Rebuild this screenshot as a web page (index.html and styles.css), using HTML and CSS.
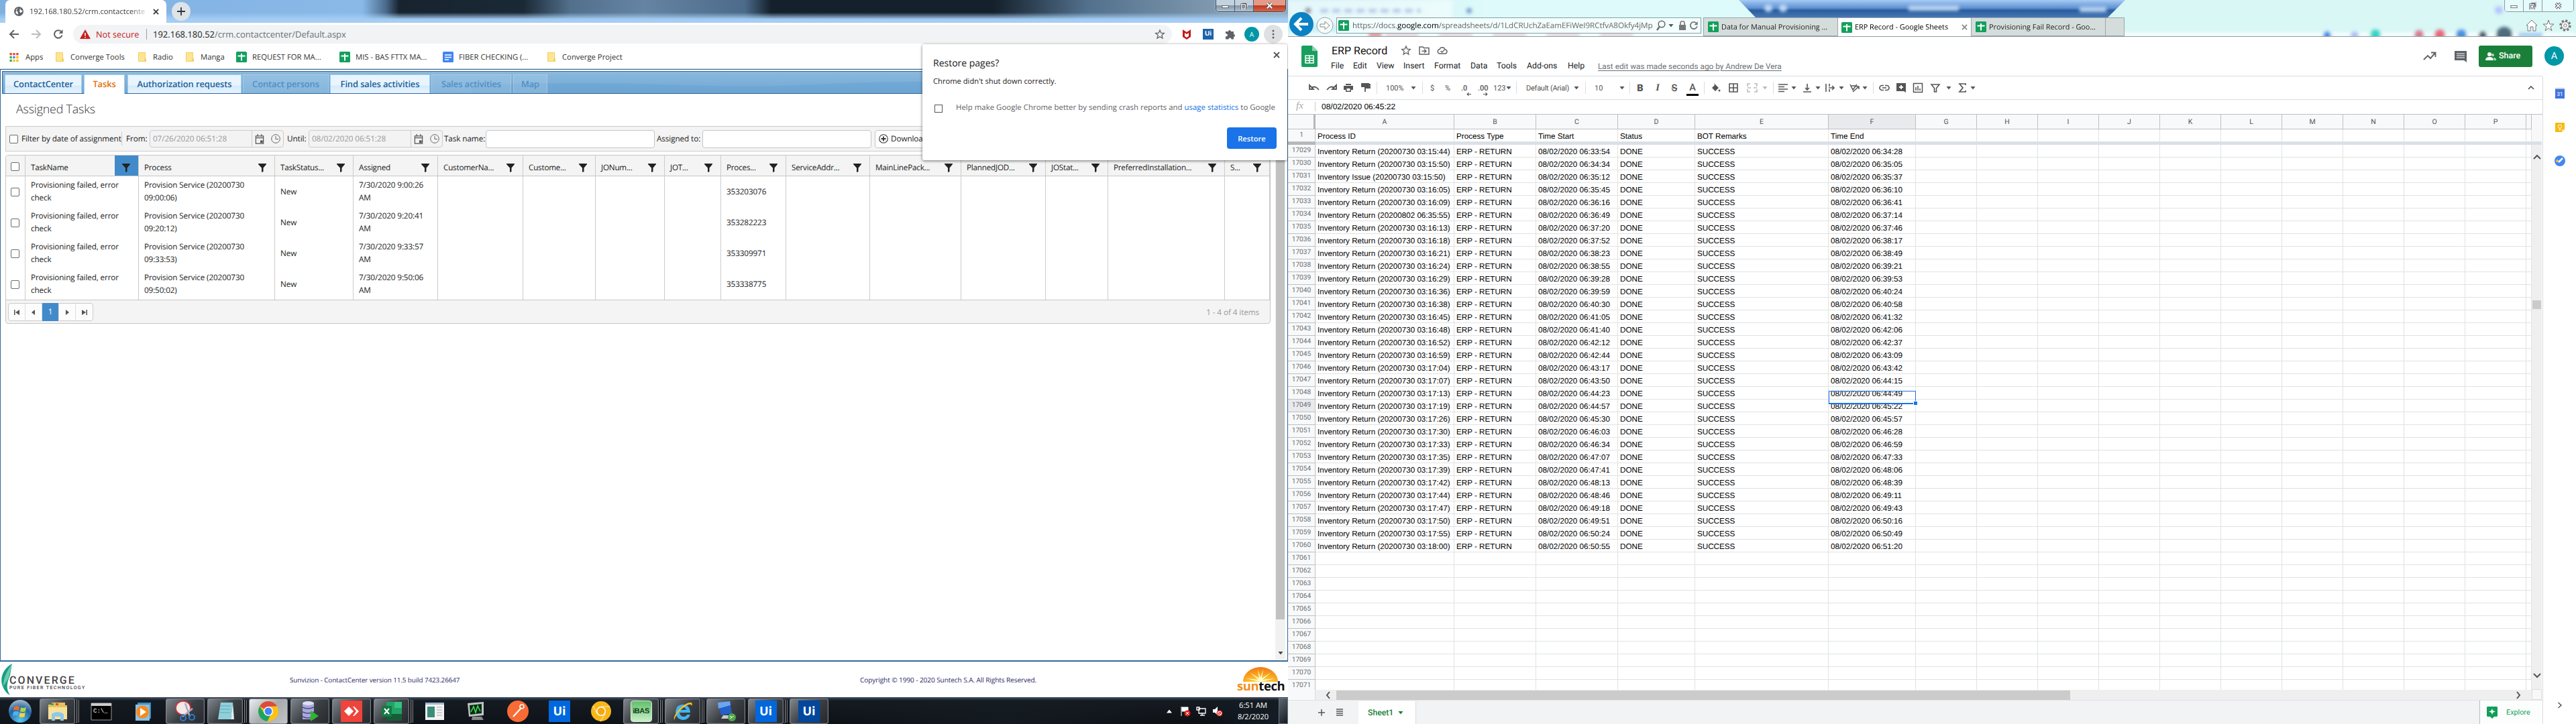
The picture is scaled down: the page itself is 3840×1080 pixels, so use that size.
FILE: index.html
```html
<!DOCTYPE html>
<html lang="en">
<head>
<meta charset="utf-8">
<title>Desktop</title>
<link rel="stylesheet" href="styles.css">
</head>
<body>
<svg class="defs" aria-hidden="true">
  <symbol id="funnel" viewBox="0 0 12 13"><path d="M0 0h12v1L7.5 6.500v5.500L5 13V6.500L0 1z"/></symbol>
  <symbol id="folder" viewBox="0 0 12 14"><path d="M0 0h11v9l1 1v4H1l-1-1z" fill="#ffe491"/><path d="M.5.5h10v9h1v4H.5z" fill="none" stroke="#f0cf62"/><path d="M9 10h2.500v3.500H9z" fill="#f3d066"/></symbol>
  <symbol id="sheet" viewBox="0 0 16 16"><rect width="16" height="16" rx="1.500" fill="#12a05c"/><path d="M2.500 6.500h11M8 3v10.500" stroke="#fff" stroke-width="2"/></symbol>
  <symbol id="doc" viewBox="0 0 16 16"><rect width="16" height="16" rx="1.500" fill="#4285f4"/><path d="M3 5h10M3 8.500h10M3 12h6" stroke="#fff" stroke-width="1.600"/></symbol>
  <symbol id="star" viewBox="0 0 24 24"><path d="M12 3l2.700 6.300 6.800.6-5.200 4.500 1.600 6.600-5.900-3.500L6.100 21l1.600-6.600L2.500 9.900l6.800-.6z" fill="none" stroke="currentColor" stroke-width="2"/></symbol>
  <symbol id="cal" viewBox="0 0 14 16"><path d="M1 3h12v12H1zM1 6h12M4 0v4M10 0v4" fill="none" stroke="currentColor" stroke-width="1.300"/><path d="M8 10h4v4H8z" fill="currentColor"/></symbol>
  <symbol id="clock" viewBox="0 0 14 14"><circle cx="7" cy="7" r="6.300" fill="none" stroke="currentColor"/><path d="M7 3v4.500h4" fill="none" stroke="currentColor"/></symbol>
  <symbol id="down" viewBox="0 0 8 6"><path d="M.5 1h7L4 5.500z" fill="currentColor"/></symbol>
  <symbol id="x" viewBox="0 0 10 10"><path d="M1 1l8 8M9 1l-8 8" stroke="currentColor" stroke-width="1.800"/></symbol>
  <symbol id="reload" viewBox="0 0 16 16"><path d="M13.500 9.500A5.800 5.800 0 1 1 12 3.900" fill="none" stroke="currentColor" stroke-width="2"/><path d="M14.500 1v6h-6z" fill="currentColor"/></symbol>
  <symbol id="chrome" viewBox="0 0 32 32"><circle cx="16" cy="16" r="15" fill="#fbc116"/><path d="M16 16L3 8.500A15 15 0 0 1 29 8.500L16 9z" fill="#dd4b3e"/><path d="M3 8.500A15 15 0 0 0 14.500 31L20 20 10 19z" fill="#1da462"/><circle cx="16" cy="16" r="7" fill="#fff"/><circle cx="16" cy="16" r="5.500" fill="#4285f4"/></symbol>
</svg>

<div class="desktop">
<section class="left">
  <header class="glass chrome-glass">
    <div class="ctab"><svg class="globe" viewBox="0 0 14 14"><circle cx="7" cy="7" r="7" fill="#5f6368"/><path d="M6 1L2.500 5l3 2.500L6 12l-4-3M9 2l1 3 3 1-3 3.500L8 7z" fill="#fff"/></svg><span class="ctab-title">192.168.180.52/crm.contactcente</span><svg class="ctab-x"><use href="#x"/></svg></div>
    <div class="newtab"><svg viewBox="0 0 12 12"><path d="M6 0v12M0 6h12" stroke="#333" stroke-width="1.800"/></svg></div>
    <div class="winbtns"><i><svg viewBox="0 0 12 12"><rect x="1" y="6" width="10" height="3.500" fill="#fff" stroke="#444" stroke-width=".8"/></svg></i><i><svg viewBox="0 0 12 12"><path d="M4 1h7v7M2 4h6v7H2z" fill="none" stroke="#444" stroke-width="3"/><path d="M4 1h7v7M2 4h6v7H2z" fill="none" stroke="#fff" stroke-width="1.500"/></svg></i><i class="close"><svg viewBox="0 0 12 12"><path d="M2 2l8 8M10 2l-8 8" stroke="#444" stroke-width="4"/><path d="M2 2l8 8M10 2l-8 8" stroke="#fff" stroke-width="2.400"/></svg></i></div>
  </header>
  <div class="navbar">
    <svg class="nav" viewBox="0 0 16 16"><path d="M15 8H2M8 2L2 8l6 6" fill="none" stroke="#5f6368" stroke-width="2"/></svg>
    <svg class="nav" viewBox="0 0 16 16"><path d="M1 8h13M8 2l6 6-6 6" fill="none" stroke="#babcbe" stroke-width="2"/></svg>
    <svg class="nav dark"><use href="#reload"/></svg>
    <div class="omni"><svg class="tri" viewBox="0 0 16 14"><path d="M8 0l8 14H0z" fill="#c5221f"/><path d="M8 5v4.500M8 11v1.500" stroke="#fff" stroke-width="1.600"/></svg><span class="insecure">Not secure</span><i class="bar"></i><span class="url"><b>192.168.180.52</b>/crm.contactcenter/Default.aspx</span><svg class="fav"><use href="#star"/></svg></div>
    <svg class="ext" viewBox="0 0 16 16"><path d="M2 1l6 4 6-4v11l-6 4-6-4zM5 6v5l3 2 3-2V6L8 8z" fill="#c01818" fill-rule="evenodd"/></svg>
    <span class="uibadge">Ui</span>
    <svg class="ext" viewBox="0 0 16 16"><path d="M1 4h4a2 2 0 1 1 4 0h4v4a2 2 0 1 1 0 4v3.500H9.500a2 2 0 1 0-4 0H1V11a2 2 0 1 0 0-3.500z" fill="#5f6368"/></svg>
    <span class="avatar">A</span>
    <span class="dots"><svg viewBox="0 0 4 14"><circle cx="2" cy="2" r="1.500"/><circle cx="2" cy="7" r="1.500"/><circle cx="2" cy="12" r="1.500"/></svg></span>
  </div>
  <nav class="bookmarks">
    <svg class="apps" viewBox="0 0 14 14"><path d="M0 0h3.500v3.500H0zM5.200 0h3.500v3.500H5.200zM10.500 0H14v3.500h-3.500z" fill="#ea4335"/><path d="M0 5.200h3.500v3.500H0z" fill="#34a853"/><path d="M5.200 5.200h3.500v3.500H5.200z" fill="#4285f4"/><path d="M10.500 5.200H14v3.500h-3.500z" fill="#fbbc05"/><path d="M0 10.500h3.500V14H0z" fill="#34a853"/><path d="M5.200 10.500h3.500V14H5.200zM10.500 10.500H14V14h-3.500z" fill="#fbbc05"/></svg><span>Apps</span>
    <svg class="fold"><use href="#folder"/></svg><span>Converge Tools</span>
    <svg class="fold"><use href="#folder"/></svg><span>Radio</span>
    <svg class="fold"><use href="#folder"/></svg><span>Manga</span>
    <svg class="file"><use href="#sheet"/></svg><span>REQUEST FOR MA...</span>
    <svg class="file"><use href="#sheet"/></svg><span>MIS - BAS FTTX MA...</span>
    <svg class="file"><use href="#doc"/></svg><span>FIBER CHECKING (...</span>
    <svg class="fold"><use href="#folder"/></svg><span>Converge Project</span>
  </nav>
  <main class="crm">
    <div class="strip">
      <svg class="wave" viewBox="0 0 1915 32" preserveAspectRatio="none"><path d="M700 20C860 14 950 18 1060 21S1230 15 1370 15H1915V32H700z" fill="#6aa3d2" opacity=".55"/></svg>
      <span class="tab">ContactCenter</span><span class="tab current">Tasks</span><span class="tab">Authorization requests</span><span class="tab off">Contact persons</span><span class="tab">Find sales activities</span><span class="tab off">Sales activities</span><span class="tab off">Map</span>
    </div>
    <div class="crm-body">
      <div class="crm-content">
        <h1>Assigned Tasks</h1>
        <div class="filter">
          <span class="cb"></span><span>Filter by date of assignment</span><i class="fsep"></i><span>From:</span>
          <span class="date"><em>07/26/2020 06:51:28</em><svg class="ci"><use href="#cal"/></svg><svg class="ki"><use href="#clock"/></svg></span>
          <span>Until:</span>
          <span class="date"><em>08/02/2020 06:51:28</em><svg class="ci"><use href="#cal"/></svg><svg class="ki"><use href="#clock"/></svg></span>
          <span>Task name:</span><span class="inp"></span>
          <span>Assigned to:</span><span class="inp"></span>
          <span class="dl"><svg viewBox="0 0 14 14"><circle cx="7" cy="7" r="6.300" fill="none" stroke="#333" stroke-width="1.100"/><path d="M7 3.500v7M3.500 7h7" stroke="#333" stroke-width="1.800"/></svg>Download</span>
        </div>
        <div class="grid" id="tasks"></div>
      </div>
      <div class="vscroll"><i></i><svg><use href="#down"/></svg></div>
    </div>
  </main>
  <footer class="crm-foot">
    <svg class="leaf" viewBox="0 0 16 48"><path d="M16 0C2 8-2 22 1 32 4 40 6 44 13 48 8 40 8 34 10 26l3-8z" fill="#16a085"/><path d="M16 0C8 12 2 24 3 34l8-12z" fill="#6cc9b0"/></svg>
    <div class="converge"><b>CONVERGE</b><small>PURE FIBER TECHNOLOGY</small></div>
    <span class="ver">Sunvizion - ContactCenter version 11.5 build 7423.26647</span>
    <span class="copy">Copyright © 1990 - 2020 Suntech S.A. All Rights Reserved.</span>
    <div class="suntech"><svg viewBox="0 0 52 22"><defs><radialGradient id="sun" cx=".5" cy="1" r="1"><stop offset="0" stop-color="#ffe24a"/><stop offset=".55" stop-color="#f9a01c"/><stop offset="1" stop-color="#f07818"/></radialGradient></defs><path d="M0 22A26 22 0 0 1 52 22z" fill="url(#sun)"/><path d="M26 22L4 17l19 2-13-11 14 9-2-14 4 13 4-13-2 14 14-9-13 11 19-2z" fill="#fffbd0"/></svg><b><span>sun</span>tech</b></div>
  </footer>
  <div class="taskbar">
    <span class="t orb"><svg viewBox="0 0 36 36"><defs><radialGradient id="o" cx=".5" cy=".9" r=".9"><stop offset="0" stop-color="#59c8f0"/><stop offset=".6" stop-color="#2363a0"/><stop offset="1" stop-color="#a9bccb"/></radialGradient></defs><circle cx="18" cy="18" r="17" fill="url(#o)"/><path d="M9 12q4-3 8-1l-1 6q-4-2-8 0z" fill="#f06a2a"/><path d="M19 12q4 2 8 0l-1 6q-4 2-8 0z" fill="#a6d64c"/><path d="M8 19q4-2 8 0l-1 6q-4-2-8 0z" fill="#4bb4ee"/><path d="M17.500 20q4 2 8 0l-1 6q-4 2-8 0z" fill="#fbd33a"/></svg></span>
    <span class="t on grp"><svg viewBox="0 0 32 32"><path d="M2 6h5V3h20v4h3v21H2z" fill="#e6c25c"/><path d="M2 10h28v18H2z" fill="#f7e29a"/><path d="M6 4h4v3H6z" fill="#3aa655"/><path d="M13 4h4v3h-4z" fill="#e04a3a"/><path d="M7 20q9-6 18 0v10h-5v-6h-8v6H7z" fill="#8ec8ea"/></svg></span>
    <span class="t"><svg viewBox="0 0 32 32"><path d="M1 4h30v25H1z" fill="#000" stroke="#999"/><path d="M1 4h30v4H1z" fill="#ccc"/><text x="4" y="18" class="cmd">C:\_</text></svg></span>
    <span class="t"><svg viewBox="0 0 32 32"><path d="M7 3h20v24H7z" fill="#3c8fc8"/><path d="M4 6h21v24H4z" fill="#88c1e6"/><circle cx="14.500" cy="17" r="9.500" fill="#f58a1f"/><path d="M11 11v12l9-6z" fill="#fff"/></svg></span>
    <span class="t on"><svg viewBox="0 0 32 32"><ellipse cx="13" cy="11" rx="11" ry="10" fill="#f5e9e9" stroke="#d33" stroke-width="1.500"/><path d="M16 4l7 20M27 12L12 24" stroke="#aab" stroke-width="2.500"/><circle cx="13" cy="26" r="4" fill="none" stroke="#2b7bd0" stroke-width="2"/><circle cx="26" cy="25" r="4" fill="none" stroke="#2b7bd0" stroke-width="2"/></svg></span>
    <span class="t on grp"><svg viewBox="0 0 32 32"><path d="M9 3h18l-3 25H5z" fill="#8fd0dc"/><path d="M27 3l2 25h-5z" fill="#dfeff2"/><path d="M9 8h15M8 13h15M8 18h15" stroke="#5ba9b8"/></svg></span>
    <span class="t on lit"><svg><use href="#chrome"/></svg></span>
    <span class="t on"><svg viewBox="0 0 32 32"><path d="M5 4h17v24H5z" fill="#a9a9d8"/><ellipse cx="13.500" cy="4" rx="8.500" ry="3" fill="#dedef5"/><path d="M5 10q8 4 17 0M5 17q8 4 17 0M5 24q8 4 17 0" stroke="#4a4a90" fill="none" stroke-width="1.500"/><path d="M17 15l12 8-12 8z" fill="#2fb52f"/></svg></span>
    <span class="t on"><svg viewBox="0 0 32 32"><path d="M0 0h32v32H0z" fill="#ef443b"/><path d="M12 9l7 7-7 7-7-7z" fill="#fff"/><path d="M18 9l2 0 7 7-7 7h-2l5-7z" fill="#fff"/></svg></span>
    <span class="t on grp"><svg viewBox="0 0 32 32"><path d="M8 2h23v28H8z" fill="#21a366"/><path d="M20 2h11v9H20z" fill="#33c481"/><path d="M8 20h23v10H8z" fill="#185c37"/><path d="M1 8h15v16H1z" fill="#107c41"/><path d="M5 12l7 8M12 12l-7 8" stroke="#fff" stroke-width="2"/></svg></span>
    <span class="t"><svg viewBox="0 0 32 32"><path d="M2 3h28v26H2z" fill="#f3f3f3"/><path d="M2 3h28v3H2z" fill="#9fb6cf"/><path d="M5 9h11v16H5z" fill="#3b8c7a"/><path d="M19 10h8M19 14h8M19 18h8M19 22h8" stroke="#aaa"/></svg></span>
    <span class="t"><svg viewBox="0 0 32 32"><path d="M3 4l24-2v20L5 24z" fill="#bfc4c4"/><path d="M6 7l18-2v14L7 21z" fill="#0a2b12"/><path d="M8 17l4-8 3 9 3-10 4 8" stroke="#3ee05a" fill="none" stroke-width="1.500"/><path d="M10 24h14l3 5H9z" fill="#888"/></svg></span>
    <span class="t"><svg viewBox="0 0 32 32"><circle cx="16" cy="16" r="16" fill="#f76b35"/><path d="M9 24L21 11" stroke="#fff" stroke-width="2"/><circle cx="22" cy="9" r="3" fill="none" stroke="#fff" stroke-width="1.500"/></svg></span>
    <span class="t"><b class="ui">Ui</b></span>
    <span class="t"><svg viewBox="0 0 32 32"><circle cx="16" cy="16" r="15" fill="#f9b61a"/><path d="M16 9h13M10 19L4 8M22 20l-7 11" stroke="#fbd568" stroke-width="2"/><circle cx="16" cy="16" r="7" fill="#fff"/><circle cx="16" cy="16" r="5.500" fill="#f5a70e"/></svg></span>
    <span class="t on grp"><b class="ibas">iBAS</b></span>
    <span class="t on grp"><svg viewBox="0 0 32 32"><path d="M27 18H11q1 6 6 6 4 0 5-3h5q-3 8-11 8Q6 28 5 17 6 6 16 6t11 12zM11 14h10q-1-4-5-4t-5 4z" fill="#43b4f0" fill-rule="evenodd"/><path d="M3 29C0 22 18 2 28 3q3 1 1 5 0-4-7-1Q8 15 3 29z" fill="#f7c325"/></svg></span>
    <span class="t on"><svg viewBox="0 0 32 32"><path d="M4 3l18-2 3 18-16 3z" fill="#2360c8"/><path d="M4 3l18-2 1 6L5 12z" fill="#6da4ee"/><path d="M12 22h8l4 5H9z" fill="#ccc"/><circle cx="25" cy="25" r="6" fill="#4fa64a"/><path d="M22 23l3 2-3 2M28 23l-3 2" stroke="#fff" fill="none"/></svg></span>
    <span class="t on grp"><b class="ui">Ui</b></span>
    <span class="t on"><b class="ui deep">Ui</b></span>
    <div class="tray"><svg viewBox="0 0 8 6"><path d="M0 5.500h8L4 .5z" fill="#fff"/></svg>
      <svg class="ti" viewBox="0 0 16 16"><path d="M2 1v14M3 2h9v6H3z" fill="#fff" stroke="#fff"/><circle cx="11" cy="11" r="4.500" fill="#d22"/><path d="M9 9l4 4M13 9l-4 4" stroke="#fff"/></svg>
      <svg class="ti" viewBox="0 0 16 16"><path d="M4 4h10v7H4zM6 14h7M9 11v3M1 2h4v4H1z" fill="none" stroke="#fff" stroke-width="1.300"/></svg>
      <svg class="ti" viewBox="0 0 16 16"><path d="M1 5h3l4-4v13l-4-4H1z" fill="#fff"/><circle cx="11" cy="11" r="4.500" fill="#d22"/><circle cx="11" cy="11" r="2.800" fill="none" stroke="#fff"/><path d="M9 9l4 4" stroke="#fff"/></svg>
      <div class="time"><span>6:51 AM</span><span>8/2/2020</span></div><i class="peek"></i></div>
  </div>
  <aside class="restore">
    <svg class="rx"><use href="#x"/></svg>
    <h2>Restore pages?</h2>
    <p>Chrome didn't shut down correctly.</p>
    <div class="help"><i></i><span>Help make Google Chrome better by sending crash reports and <a>usage statistics</a> to Google</span></div>
    <div class="ract"><button>Restore</button></div>
  </aside>
</section>

<section class="right">
  <header class="glass ie">
    <svg class="ghost" viewBox="0 0 1920 54"><defs><linearGradient id="gb" x1="0" x2="0" y1="0" y2="1"><stop offset="0" stop-color="#a6caf5"/><stop offset=".45" stop-color="#5f93d2"/><stop offset=".6" stop-color="#2c5c9c"/><stop offset="1" stop-color="#4579b8"/></linearGradient><filter id="bl"><feGaussianBlur stdDeviation="2.500"/></filter></defs>
      <path d="M1130 0C1000 8 850 54 700 54H2000V0z" fill="#d4f3ef" opacity=".5"/>
      <path d="M672 0H1248L1222 26H697z" fill="url(#gb)"/>
      <g filter="url(#bl)"><path d="M0 0h245v30l12 6H0z" fill="#fff" opacity=".5"/><path d="M0 48h1920v8H0z" fill="#fff" opacity=".7"/><circle cx="30" cy="16" r="5" fill="#99a"/><path d="M48 16h150" stroke="#b5cbe8" stroke-width="6" stroke-dasharray="12 6"/><circle cx="270" cy="16" r="4" fill="#79c"/><path d="M120 52h20" stroke="#e06070" stroke-width="5"/><path d="M145 52h380" stroke="#e8bccb" stroke-width="4" stroke-dasharray="50 30"/><circle cx="716" cy="12" r="6" fill="#bdd7f4"/><circle cx="738" cy="12" r="6" fill="#bdd7f4"/><path d="M925 12h75M1180 14h40" stroke="#b7d1f0" stroke-width="8"/><circle cx="1549" cy="53" r="6" fill="#3f8bea"/><circle cx="1590" cy="53" r="6" fill="#aebcf0"/><circle cx="1621" cy="52" r="8" fill="#36d5c6"/><circle cx="1686" cy="52" r="7" fill="#d77a90"/><circle cx="1717" cy="52" r="8" fill="#e46a7c"/><circle cx="1749" cy="52" r="8" fill="#4a92e0"/><circle cx="1781" cy="53" r="6" fill="#4a5a68"/><circle cx="1813" cy="52" r="12" fill="#4d6c7c"/><path d="M1834 52h36" stroke="#9cc6f0" stroke-width="6"/><circle cx="1805" cy="15" r="6" fill="#b5c5ff"/></g></svg>
    <div class="ie-row">
      <svg class="ieback" viewBox="0 0 36 36"><circle cx="18" cy="18" r="18" fill="#0c82c4"/><path d="M28 18H10M18 9l-9 9 9 9" fill="none" stroke="#fff" stroke-width="4"/></svg>
      <svg class="iefwd" viewBox="0 0 26 26"><circle cx="13" cy="13" r="12" fill="#f4fbfb" stroke="#98a5a8"/><path d="M6 11h7V7l7 6-7 6v-4H6z" fill="#fff" stroke="#888"/></svg>
      <div class="addr"><svg class="file"><use href="#sheet"/></svg><span>https://docs.<b>google.com</b>/spreadsheets/d/1LdCRUchZaEamEFiWeI9RCtfvA8Okfy4jMp</span>
        <svg class="m" viewBox="0 0 14 16"><circle cx="8" cy="6" r="4.800" fill="none" stroke="#666" stroke-width="1.500"/><path d="M5 9.500L1 15" stroke="#666" stroke-width="2.200"/></svg><svg class="d"><use href="#down"/></svg><svg class="l" viewBox="0 0 12 14"><path d="M1 6h10v8H1z" fill="#777"/><path d="M3 6V3.500a3 3 0 0 1 6 0V6" fill="none" stroke="#777" stroke-width="1.600"/></svg><svg class="r"><use href="#reload"/></svg></div>
      <div class="ietabs"><span><svg class="file"><use href="#sheet"/></svg>Data for Manual Provisioning ...</span><span class="act"><svg class="file"><use href="#sheet"/></svg>ERP Record - Google Sheets<svg class="tx"><use href="#x"/></svg></span><span><svg class="file"><use href="#sheet"/></svg>Provisioning Fail Record - Goo...</span><span></span></div>
      <div class="ietools">
        <svg viewBox="0 0 18 18"><path d="M1 9l8-8 8 8h-2v8h-4v-6H7v6H3V9z" fill="#fff" stroke="#777"/></svg>
        <svg viewBox="0 0 18 18"><path d="M9 1l2 6h6l-5 4 2 6-5-4-5 4 2-6-5-4h6z" fill="#fff" stroke="#777"/></svg>
        <svg viewBox="0 0 18 18"><circle cx="9" cy="9" r="7" fill="none" stroke="#777" stroke-width="3.500" stroke-dasharray="3 2.500"/><circle cx="9" cy="9" r="5.500" fill="#fff" stroke="#777"/><circle cx="9" cy="9" r="2.300" fill="none" stroke="#777"/></svg>
      </div>
    </div>
    <div class="winbtns pale"><i><svg viewBox="0 0 12 12"><rect x="1" y="6" width="10" height="3.500" fill="#fff" stroke="#444" stroke-width=".8"/></svg></i><i><svg viewBox="0 0 12 12"><path d="M4 1h7v7M2 4h6v7H2z" fill="none" stroke="#445" stroke-width="3"/><path d="M4 1h7v7M2 4h6v7H2z" fill="none" stroke="#fff" stroke-width="1.200"/></svg></i><i class="wide"><svg viewBox="0 0 12 12"><path d="M2 2l8 8M10 2l-8 8" stroke="#445" stroke-width="4"/><path d="M2 2l8 8M10 2l-8 8" stroke="#fff" stroke-width="2"/></svg></i></div>
  </header>
  <div class="ghead">
    <svg class="logo" viewBox="0 0 24 32"><path d="M2 0h14l8 8v22a2 2 0 0 1-2 2H2a2 2 0 0 1-2-2V2a2 2 0 0 1 2-2z" fill="#17a05d"/><path d="M16 0l8 8h-8z" fill="#8ed1b1"/><path d="M6 15h12v11H6zM6 18.700h12M6 22.300h12M12 15v11" fill="none" stroke="#fff" stroke-width="1.500"/></svg>
    <div class="gtitle">
      <div class="name"><span>ERP Record</span><svg class="s"><use href="#star"/></svg><svg class="s" viewBox="0 0 16 16"><path d="M1 3h5l1.500 1.500H15V14H1z" fill="none" stroke="#5f6368" stroke-width="1.500"/><path d="M4.500 9.300h6M8 6.500l3 2.800L8 12" fill="none" stroke="#5f6368" stroke-width="1.400"/></svg><svg class="s" viewBox="0 0 16 16"><path d="M4 13a3.300 3.300 0 0 1 0-6.500 4.200 4.200 0 0 1 8 .5 3 3 0 0 1 0 6z" fill="none" stroke="#5f6368" stroke-width="1.400"/><path d="M5.500 9l2 2 3.500-3.500" fill="none" stroke="#5f6368" stroke-width="1.400"/></svg></div>
      <div class="menus"><span>File</span><span>Edit</span><span>View</span><span>Insert</span><span>Format</span><span>Data</span><span>Tools</span><span>Add-ons</span><span>Help</span><u>Last edit was made seconds ago by Andrew De Vera</u></div>
    </div>
    <div class="gright">
      <svg class="tr" viewBox="0 0 20 14"><path d="M1 12l6-6 4 4 7-8M12 1.500h6.500V8" fill="none" stroke="#5f6368" stroke-width="1.900"/></svg>
      <svg class="cm" viewBox="0 0 18 18"><path d="M0 1h18v17l-4-3H0z" fill="#5f6368"/><path d="M3 5h12M3 8h12M3 11h12" stroke="#fff" stroke-width="1.200"/></svg>
      <span class="share"><svg viewBox="0 0 16 14"><circle cx="6" cy="4" r="3" fill="#fff"/><path d="M0 13q0-5 6-5t6 5z" fill="#fff"/><circle cx="11" cy="5" r="2" fill="#b8dcc2"/><path d="M12 9q4 0 4 4h-3z" fill="#b8dcc2"/></svg>Share</span>
      <span class="gav">A</span>
    </div>
  </div>
  <div class="gmain">
    <div class="gsheet">
      <div class="gtools">
        <svg viewBox="0 0 16 16"><path d="M1 4v6h6zM4 8.500q5-5 11 2.500" fill="none" stroke="#555" stroke-width="1.800"/></svg>
        <svg viewBox="0 0 16 16"><path d="M15 4v6H9zM12 8.500q-5-5-11 2.500" fill="none" stroke="#555" stroke-width="1.800"/></svg>
        <svg viewBox="0 0 16 16"><path d="M4 2h8v2H4zM1 5h14v6h-3v3H4v-3H1zM5.500 9v3.500h5V9z" fill="#555" fill-rule="evenodd"/></svg>
        <svg viewBox="0 0 16 16"><path d="M2 2h10v4H2zM12 3h2v5H7v6" fill="none" stroke="#555" stroke-width="1.800"/><path d="M2 2h10v4H2z" fill="#555"/></svg>
        <i></i><span>100%</span><svg class="a"><use href="#down"/></svg><i></i>
        <span>$</span><span>%</span><span class="dec">.0<svg viewBox="0 0 6 4"><path d="M6 2H1M3 0L1 2l2 2" stroke="#555" fill="none"/></svg></span><span class="dec">.00<svg viewBox="0 0 6 4"><path d="M0 2h5M3 0l2 2-2 2" stroke="#555" fill="none"/></svg></span><span class="n123">123<svg class="a"><use href="#down"/></svg></span><i></i>
        <span class="df">Default (Arial)</span><svg class="a"><use href="#down"/></svg><i></i><span>10</span><svg class="a"><use href="#down"/></svg><i></i>
        <span class="fmt b">B</span><span class="fmt it">I</span><span class="fmt st">S</span><span class="fmt ul">A</span><i></i>
        <svg viewBox="0 0 16 16"><path d="M6 1l7 7-5 5-5-5 4-4z" fill="#555"/><circle cx="14" cy="12" r="1.500" fill="#555"/></svg>
        <svg viewBox="0 0 16 16"><path d="M2 2h12v12H2zM8 2v12M2 8h12" fill="none" stroke="#555" stroke-width="1.600"/></svg>
        <svg viewBox="0 0 16 16"><path d="M5 2H1v4M11 2h4v4M5 14H1v-4M11 14h4v-4M1 8h5M15 8h-5" fill="none" stroke="#bbb" stroke-width="1.600"/></svg><svg class="a pale"><use href="#down"/></svg><i></i>
        <svg viewBox="0 0 16 16"><path d="M1 3h14M1 6.500h9M1 10h14M1 13.500h9" stroke="#555" stroke-width="1.600"/></svg><svg class="a"><use href="#down"/></svg>
        <svg viewBox="0 0 16 16"><path d="M2 14h12M8 2v9M5 8l3 3 3-3" stroke="#555" fill="none" stroke-width="1.600"/></svg><svg class="a"><use href="#down"/></svg>
        <svg viewBox="0 0 16 16"><path d="M2 2v12M7 2v4M7 10v4M6 8h8M11 5l3 3-3 3" stroke="#555" fill="none" stroke-width="1.600"/></svg><svg class="a"><use href="#down"/></svg>
        <svg viewBox="0 0 16 16"><path d="M1 3l4 8 6-8M3 5h7M5 14l9-8M10 6h4v4" stroke="#555" fill="none" stroke-width="1.500"/></svg><svg class="a"><use href="#down"/></svg><i></i>
        <svg viewBox="0 0 16 16"><path d="M7 4.500H4.500a3.500 3.500 0 0 0 0 7H7M9 4.500h2.500a3.500 3.500 0 0 1 0 7H9M5 8h6" fill="none" stroke="#555" stroke-width="1.700"/></svg>
        <svg viewBox="0 0 16 16"><path d="M1 1h14v14l-3-2H1zM7 4v2H5v2h2v2h2V8h2V6H9V4z" fill="#555" fill-rule="evenodd"/></svg>
        <svg viewBox="0 0 16 16"><path d="M1.500 1.500h13v13h-13zM5 7v5M8 5v7M11 9v3" fill="none" stroke="#555" stroke-width="1.500"/></svg>
        <svg viewBox="0 0 16 16"><path d="M2 3h12L9.500 8.500V14h-3V8.500z" fill="none" stroke="#555" stroke-width="1.600"/></svg><svg class="a"><use href="#down"/></svg>
        <svg viewBox="0 0 16 16"><path d="M13 4V2H4l5 6-5 6h9v-2" fill="none" stroke="#555" stroke-width="1.700"/></svg><svg class="a"><use href="#down"/></svg>
        <svg class="up" viewBox="0 0 10 8"><path d="M1 6l4-4 4 4" fill="none" stroke="#555" stroke-width="1.700"/></svg>
      </div>
      <div class="fbar"><em>fx</em><i></i><span>08/02/2020 06:45:22</span></div>
      <div class="cells">
        <div class="cellwrap">
          <div class="row head"><span></span><span>A</span><span>B</span><span>C</span><span>D</span><span>E</span><span class="hl">F</span><span>G</span><span>H</span><span>I</span><span>J</span><span>K</span><span>L</span><span>M</span><span>N</span><span>O</span><span>P</span><span></span></div>
          <div class="row"><span>1</span><span>Process ID</span><span>Process Type</span><span>Time Start</span><span>Status</span><span>BOT Remarks</span><span>Time End</span><span></span><span></span><span></span><span></span><span></span><span></span><span></span><span></span><span></span><span></span><span></span></div>
          <div class="freeze"><i></i></div>
          <div class="rows" id="erp"></div>
          <div class="selbox"></div>
          <div class="hscroll"><b></b><svg viewBox="0 0 8 12"><path d="M6 1L2 6l4 5" fill="none" stroke="#555" stroke-width="2"/></svg><i></i><svg class="rt" viewBox="0 0 8 12"><path d="M2 1l4 5-4 5" fill="none" stroke="#555" stroke-width="2"/></svg></div>
        </div>
        <div class="gscroll"><svg viewBox="0 0 12 8"><path d="M1 7l5-5 5 5" fill="none" stroke="#555" stroke-width="2"/></svg><i></i><svg class="dn" viewBox="0 0 12 8"><path d="M1 1l5 5 5-5" fill="none" stroke="#555" stroke-width="2"/></svg><b></b></div>
      </div>
      <div class="gtabs"><svg class="plus" viewBox="0 0 10 10"><path d="M5 0v10M0 5h10" stroke="#555" stroke-width="1.500"/></svg><svg class="list" viewBox="0 0 10 11"><path d="M0 1h10M0 4h10M0 7h10M0 10h10" stroke="#555" stroke-width="1.700"/></svg><span class="st1">Sheet1<svg><use href="#down"/></svg></span>
        <span class="explore"><svg viewBox="0 0 16 18"><path d="M1 0h14l1 1v13l-1 1h-4l-3 3-3-3H1l-1-1V1z" fill="#129e59"/><path d="M8 3l1.300 3.200L13 7.500 9.300 8.800 8 12 6.700 8.800 3 7.500l3.700-1.300z" fill="#fff"/></svg>Explore</span></div>
    </div>
    <aside class="gside">
      <svg viewBox="0 0 16 16"><path d="M1 0h14v4H1z" fill="#c9ccd1"/><path d="M1 2h14v14H1z" fill="#3e74e0"/><text x="8" y="12" class="c31">31</text></svg>
      <svg viewBox="0 0 16 16"><path d="M1 1h14v10l-4 4H1z" fill="#f9b90f"/><path d="M15 11h-4v4z" fill="#fde29a"/><circle cx="8" cy="6.500" r="2.700" fill="none" stroke="#fff"/><path d="M6.500 10.500h3M7 12h2" stroke="#fff"/></svg>
      <svg viewBox="0 0 16 16"><circle cx="8" cy="8" r="8" fill="#4285f4"/><path d="M6 10l6-6" stroke="#fff" stroke-width="2.500"/><circle cx="4" cy="8" r="2" fill="#f9bb2d"/></svg>
      <svg class="ch" viewBox="0 0 8 10"><path d="M1.500 1l4.500 4-4.500 4" fill="none" stroke="#555" stroke-width="1.500"/></svg>
    </aside>
  </div>
</section>
</div>
<script src="app.js"></script>
</body>
</html>
```
FILE: styles.css
```css
* { box-sizing: border-box; }
body { margin: 0; background: #fff; font: 11.750px "Open Sans", "Noto Sans", sans-serif; color: #222; text-rendering: geometricPrecision; }
i, em { font-style: normal; }
svg { display: block; flex: none; }
.defs { position: absolute; width: 0; height: 0; }
.desktop { display: grid; grid-template-columns: 1920px 1920px; width: 3840px; height: 1080px; overflow: hidden; }
.left, .right { position: relative; display: flex; flex-direction: column; height: 1080px; overflow: hidden; white-space: nowrap; }

/* Chrome frame */
.chrome-glass { height: 34px; flex: none; display: flex; padding-left: 8px;
  background: linear-gradient(180deg, transparent 55%, #a5cdf3 85%), linear-gradient(90deg, #7fb0e0 0, #8ab9e8 540px, #4a6b8c 575px, #17232f 595px, #1a2936 780px, #526f8c 850px, #6584a4 960px, #4c6b8a 1110px, #14202b 1150px, #14202b 1480px, #52708c 1620px, #8fa8bd 1880px); }
.ctab { width: 240px; height: 34px; background: #fff; border-radius: 7px 7px 0 0; display: flex; align-items: center; padding-left: 13px; font-size: 11.200px; color: #3c4043; }
.globe { width: 14px; height: 14px; }
.ctab-title { width: 174px; margin-left: 9px; overflow: hidden; letter-spacing: -.05px; -webkit-mask-image: linear-gradient(90deg, #000 150px, transparent 178px); }
.ctab-x { width: 9px; height: 9px; margin-left: 10px; color: #333; }
.newtab { width: 28px; height: 28px; margin: 3px 0 0 8px; border-radius: 50%; background: #dce3e9; display: grid; place-items: center; }
.newtab svg { width: 12px; height: 12px; }
.winbtns { display: flex; height: 18px; margin: 0 3px 0 auto; border: 1px solid #3b4a59; border-top: 0; border-radius: 0 0 5px 5px; overflow: hidden; box-shadow: 0 0 2px #fff; }
.winbtns i { width: 28px; display: grid; place-items: center; border-right: 1px solid #4a5968; background: linear-gradient(#c4d2df 45%, #8297ac 50%, #b0c2d3); }
.winbtns svg { width: 11px; height: 11px; }
.winbtns i.close { width: 47px; border: 0; background: linear-gradient(#e39a89 45%, #bd3a22 50%, #d5664a); }
.winbtns.pale { position: absolute; top: 0; right: 3px; margin: 0; border-color: #8a9a9e; z-index: 2; }
.winbtns.pale i { background: #e6fbfc; border-color: #8a9a9e; }
.winbtns.pale i.wide { width: 46px; border: 0; }

.navbar { height: 34px; flex: none; display: flex; align-items: center; padding: 0 8px 0 13px; }
.nav { width: 16px; height: 16px; margin-right: 17px; }
.nav.dark { color: #5f6368; margin-right: 14px; }
.omni { width: 1640px; height: 28px; border-radius: 14px; background: #f1f3f4; display: flex; align-items: center; padding-left: 10px; font-size: 13px; }
.tri { width: 16px; height: 14px; }
.insecure { width: 75px; margin-left: 8px; color: #c5221f; font-size: 12.700px; }
.bar { width: 1px; height: 16px; background: #9aa0a6; }
.url { margin-left: 9px; color: #6b7075; letter-spacing: 0; }
.url b { font-weight: 400; color: #222; }
.fav { width: 16px; height: 16px; margin: 0 10px 0 auto; color: #5f6368; }
.ext { width: 16px; height: 16px; margin-left: 14px; }
.uibadge { width: 16px; height: 16px; margin-left: 16px; margin-right: 3px; background: #1c63ad; color: #fff; font: 700 10px/16px "Liberation Sans", sans-serif; text-align: center; }
.avatar { width: 22px; height: 22px; margin-left: 13px; border-radius: 50%; background: #0097a7; color: #fff; text-align: center; font: 10px/22px "Open Sans", sans-serif; }
.dots { width: 28px; height: 28px; margin-left: 7px; border-radius: 50%; background: #dfe0e1; display: grid; place-items: center; flex: none; }
.dots svg { width: 4px; height: 14px; fill: #5f6368; }
.bookmarks { height: 35px; flex: none; display: grid; align-items: center; padding-left: 14px; font-size: 11.300px; color: #333;
  grid-template-columns: 24px 45px 22px 101px 22px 49px 22px 53px 24px 130px 24px 130px 24px 132px 22px auto; border-bottom: 1px solid #d8dadd; }
.apps { width: 14px; height: 13px; }
.fold { width: 12px; height: 14px; }
.file { width: 16px; height: 16px; }

/* CRM page */
.crm { height: 884px; flex: none; border: solid #336799; border-width: 1px 1px 2px 1px; padding: 2px 0 0 2px; display: flex; flex-direction: column; }
.strip { position: relative; height: 34px; flex: none; border: 1px solid #336799; border-width: 1px 0 1px 1px; background: linear-gradient(#8bb9dc, #7db0d9 50%, #6ea7d4); display: flex; gap: 3px; padding: 4px 0 0 3px; align-items: flex-end; }
.wave { position: absolute; left: 0; top: 0; width: 100%; height: 32px; }
.tab { position: relative; height: 28px; border: 1px solid #a8cdea; border-bottom: 0; background: linear-gradient(#e9f5fe 55%, #d5eafb 60%, #e8f4fe); color: #215f9a; font: 600 12.900px/27px "Open Sans", sans-serif; text-align: center; width: 115px; letter-spacing: -.1px; }
.tab.current { width: 61px; height: 29px; margin-bottom: -1px; background: #fff; color: #e17009; }
.tab:nth-of-type(3) { width: 170px; margin-left: 1px; }
.tab:nth-of-type(4) { width: 128px; margin-left: -1px; }
.tab:nth-of-type(5) { width: 149px; margin-left: -1px; }
.tab:nth-of-type(6) { width: 119px; margin-left: -1px; }
.tab:nth-of-type(7) { width: 51px; }
.tab.off { background: rgba(170, 205, 232, .4); border-color: rgba(190, 218, 240, .5); color: #4f90c5; }
.crm-body { display: flex; flex: 1; }
.crm-content { width: 1886px; margin-left: 5px; }
h1 { margin: 0; height: 48px; padding-left: 16px; font: 300 17.800px/46px "Open Sans", sans-serif; color: #333; letter-spacing: -.15px; }
.filter { height: 38px; background: #f4f4f4; border: 1px solid #ccc; display: grid; align-items: center; padding-left: 5px;
  grid-template-columns: 18px 149px 7px 35px 205px 32px 202px 62px 255px 68px 257px 120px; overflow: hidden; letter-spacing: -.1px; }
.cb { width: 13px; height: 13px; border: 1px solid #6c6c6c; border-radius: 2px; background: #fff; }
.fsep { width: 1px; height: 20px; background: #ccc; }
.date { width: 200px; height: 26px; border: 1px solid #ccc; border-radius: 4px; display: flex; align-items: center; color: #999; background: #f3f3f4; }
.date em { width: 152px; height: 24px; line-height: 24px; padding-left: 4px; border-right: 1px solid #ccc; }
.ci { width: 14px; height: 15px; margin-left: 4px; color: #555; }
.ki { width: 14px; height: 14px; margin-left: 10px; color: #666; }
.inp { width: 252px; height: 27px; background: #fff; border: 1px solid #c5c5c5; border-radius: 4px; }
.dl { height: 27px; background: #fff; border: 1px solid #c5c5c5; border-radius: 4px; display: flex; align-items: center; gap: 4px; padding-left: 5px; }
.dl svg { width: 14px; height: 14px; }
.grid { margin-top: 5px; border: 1px solid #c6c6c6; border-radius: 4px; background: #f4f4f4; height: 252px; overflow: hidden; }
.g { display: grid; grid-template-columns: 29px 169px 203px 117px 126px 127px 108px 103px 84px 97px 125px 136px 126px 93px 174px 67px; }
.g > span { border-right: 1px solid #ccc; padding-left: 8px; display: flex; align-items: center; background: #fff; letter-spacing: -.14px; }
.g > span:first-child { padding-left: 7px; }
.g.h { height: 31px; border-bottom: 1px solid #c6c6c6; }
.g.h > span { background: #f4f4f4; padding-top: 6px; letter-spacing: -.25px; }
.g.h > span:first-child { padding-top: 3px; }
.g.h svg { width: 12px; height: 13px; margin: 0 12px 0 auto; fill: #222; }
.g.h > span.sel { background: linear-gradient(90deg, #f4f4f4 133px, #428bca 0); }
.g.r { height: 46px; line-height: 19px; white-space: normal; }
.g.r > span:nth-child(2) { padding-right: 25px; }
.g.r > span:nth-child(3) { padding-right: 40px; }
.pager { height: 36px; border-top: 1px solid #c6c6c6; display: flex; align-items: center; padding: 0 16px 0 3px; color: #999; }
.pager div { display: flex; border: 1px solid #ccc; border-radius: 4px; height: 27px; background: #fcfcfc; }
.pager div span { width: 25px; border-right: 1px solid #ddd; text-align: center; line-height: 25px; display: grid; place-items: center; }
.pager div span:last-child { border: 0; }
.pager .cur { background: #428bca; color: #fff; margin: -1px 0; }
.pager svg { width: 8px; height: 8px; fill: #555; }
.pager em { margin-left: auto; letter-spacing: -.1px; }
.vscroll { width: 15px; height: 844px; margin-left: 7px; background: #f1f1f1; display: flex; flex-direction: column; align-items: center; }
.vscroll i { width: 13px; height: 784px; background: #c1c1c1; }
.vscroll svg { width: 8px; height: 6px; margin-top: 47px; color: #444; }
.crm-foot { height: 53px; flex: none; display: grid; grid-template-columns: 12px 418px 850px 562px auto; padding-left: 2px; align-items: center; font-size: 9.900px; color: #2d2a6b; letter-spacing: -.1px; }
.copy { font-size: 10.100px; }
.leaf { width: 16px; height: 47px; }
.converge { padding-top: 10px; color: #444; }
.converge b { display: block; font: 500 16px/14px "Roboto", sans-serif; letter-spacing: 2.100px; }
.converge small { display: block; font: 500 7px/8px "Roboto", sans-serif; letter-spacing: 1.400px; }
.suntech { width: 72px; }
.suntech svg { width: 52px; height: 22px; margin: 0 auto 0 9px; }
.suntech b { display: block; font: 700 18.500px/15px "Open Sans", sans-serif; letter-spacing: -.4px; color: #111; margin-top: -1px; height: 17px; }
.suntech b span { color: #f39020; }

/* taskbar */
.taskbar { height: 40px; flex: none; display: grid; align-items: center; padding-left: 2px; border-top: 1px solid #3a4856;
  grid-template-columns: 55px 62px 64px 62px 62px 62px 62px 62px 62px 62px 62px 62px 62px 62px 62px 62px 62px 62px 62px 62px 1fr;
  background: linear-gradient(180deg, #3b4958 0, #151b22 4px, rgba(16, 20, 26, .6) 100%), linear-gradient(90deg, #0f151b 0, #0a0e12 1240px, #1b222b 1500px, #060809 1780px, #1c2c40 1920px); background-color: #0b0e12; }
.t { width: 58px; height: 38px; display: grid; place-items: center; justify-self: center; }
.t.on { border: 1px solid #7b8086; border-radius: 3px; background: linear-gradient(135deg, #80868c, #3c4045 50%, #25292e); box-shadow: inset 0 0 1px #ccc; }
.t.grp { width: 53px; margin-right: 5px; box-shadow: inset 0 0 1px #ccc, 3px 0 0 -1px #0d1116, 4px 0 0 -1px #888, 7px 0 0 -2px #20252a, 8px 0 0 -2px #777; }
.t.lit { background: linear-gradient(135deg, #eceef0, #a8abae 50%, #c2c4c6); }
.t svg { width: 32px; height: 32px; }
.t.orb svg { width: 36px; height: 36px; }
.cmd { font: 9px "Liberation Mono", monospace; fill: #fff; }
.ui { width: 32px; height: 32px; background: #0067df; color: #fff; font: 700 18px/32px "Open Sans", sans-serif; text-align: center; }
.ui.deep { background: #01479d; }
.ibas { width: 32px; height: 32px; border-radius: 4px; background: linear-gradient(#5fc06a, #c9efc7); border: 1px solid #dff3de; color: #113c16; font: 700 11px/30px "Liberation Sans", sans-serif; letter-spacing: -.4px; text-align: center; }
.tray { justify-self: end; display: flex; align-items: center; height: 39px; color: #fff; }
.tray > svg { width: 8px; height: 6px; margin-right: 12px; }
.tray > svg.ti { width: 16px; height: 16px; margin-right: 8px; }
.time { width: 74px; text-align: center; font-size: 11.100px; line-height: 17px; margin: 0 1px 0 0; }
.time span { display: block; }
.peek { width: 14px; height: 39px; border: 1px solid #6f7780; background: linear-gradient(135deg, #5a6672, #161b20); }

/* restore bubble */
.restore { position: absolute; left: 1375px; top: 66px; width: 544px; height: 173px; background: #fff; border-radius: 3px; box-shadow: 0 1px 4px rgba(0, 0, 0, .55); padding: 0 16px; color: #222; }
.rx { position: absolute; right: 11px; top: 11px; width: 10px; height: 10px; color: #555; }
.restore h2 { margin: 19px 0 0; font: 14.100px/20px "Open Sans", sans-serif; letter-spacing: -.05px; }
.restore p { margin: 8px 0 0; font-size: 11.200px; line-height: 18px; }
.help { display: flex; align-items: center; margin-top: 20px; height: 18px; font-size: 11.400px; color: #5f6368; letter-spacing: .03px; }
.help i { width: 12px; height: 12px; border: 1.500px solid #555; margin: 3px 20px 0 2px; }
.help a { color: #1a73e8; }
.ract { display: flex; justify-content: flex-end; margin-top: 21px; }
.ract button { width: 74px; height: 32px; border: 0; border-radius: 4px; background: #1a73e8; color: #fff; font: 600 11.200px "Open Sans", sans-serif; }

/* IE frame */
.ie { position: relative; height: 55px; flex: none; background: linear-gradient(90deg, #c8eef5 0, #defafa 300px, #dcfbfb); border-bottom: 1px solid #8f9c9c; overflow: hidden; }
.ghost { position: absolute; left: 0; top: 0; width: 1920px; height: 54px; }
.ie-row { position: relative; display: flex; align-items: flex-start; height: 54px; padding-top: 26px; font-size: 10.900px; }
.ieback { width: 36px; height: 36px; margin: -8px 0 0 2px; }
.iefwd { width: 26px; height: 26px; margin: -1px 0 0 4px; }
.addr { width: 544px; height: 24px; margin-left: 4px; border: 1px solid #8aa0a4; background: rgba(250, 255, 255, .75); display: flex; align-items: center; padding-left: 2px; font-size: 11.700px; color: #666; }
.addr span { width: 449px; margin-left: 5px; overflow: hidden; letter-spacing: -.1px; }
.addr b { font-weight: 400; color: #000; }
.addr .m { width: 14px; height: 16px; margin-left: 4px; }
.addr .d { width: 8px; height: 6px; margin-left: 4px; color: #555; }
.addr .l { width: 12px; height: 14px; margin-left: 7px; }
.addr .r { width: 14px; height: 14px; margin-left: 4px; color: #777; }
.ietabs { display: flex; margin-left: 3px; }
.ietabs > span { width: 200px; height: 28px; background: #d5dcdc; border: 1px solid #9aa7a8; border-left-width: 0; display: flex; align-items: center; padding-left: 6px; gap: 4px; color: #222; letter-spacing: -.02px; }
.ietabs > span:first-child { width: 201px; border-left-width: 1px; }
.ietabs > .act { background: #fff; border-bottom: 0; width: 199px; padding-left: 5px; color: #000; }
.ietabs > span:last-child { width: 28px; }
.tx { width: 9px; height: 9px; margin: 0 5px 0 auto; color: #888; }
.ietools { display: flex; gap: 7px; margin: 3px 7px 0 auto; }
.ietools svg { width: 18px; height: 18px; }

/* Sheets header */
.ghead { height: 59px; flex: none; display: flex; border-bottom: 1px solid #dadce0; font-family: "Roboto", sans-serif; width: 1870px; }
.logo { width: 24px; height: 32px; margin: 13px 0 0 20px; }
.gtitle { margin-left: 20px; }
.name { display: flex; align-items: center; height: 30px; margin-top: 5px; font-size: 16px; color: #111; }
.name span { width: 103px; margin-left: 1px; }
.name .s { width: 16px; height: 16px; margin-right: 11px; color: #5f6368; }
.menus { display: grid; grid-template-columns: 33px 35px 40px 46px 54px 39px 45px 61px 45px auto; font-size: 12.300px; line-height: 18px; color: #202124; }
.menus u { color: #6b7075; font-size: 11.800px; text-underline-offset: 2px; }
.gright { display: flex; align-items: flex-start; margin: 13px -50px 0 auto; padding-right: 18px; }
.tr { width: 20px; height: 14px; margin: 9px 27px 0 0; }
.cm { width: 18px; height: 18px; margin: 7px 18px 0 0; }
.share { width: 80px; height: 32px; border-radius: 3px; background: #1a8039; color: #fff; font: 500 12.500px/32px "Roboto", sans-serif; display: flex; align-items: center; gap: 4px; padding-left: 10px; }
.share svg { width: 16px; height: 14px; }
.gav { width: 29px; height: 29px; margin: 1px 0 0 18px; border-radius: 50%; background: #0097a7; color: #fff; text-align: center; font: 14.500px/30px "Roboto", sans-serif; }
.gmain { display: flex; flex: 1; }
.gsheet { width: 1870px; }
.gtools { height: 35px; border-bottom: 1px solid #dadce0; display: grid; align-items: center; padding-left: 31px; font: 11px "Roboto", sans-serif; color: #555;
  grid-template-columns: 26px 25px 26px 24px 14px 37px 17px 12px 22px 24px 25px 23px 34px 15px 71px 17px 14px 37px 15px 8px 26px 25px 26px 26px 9px 27px 28px 23px 16px 7px 20px 16px 20px 14px 21px 16px 19px 16px 9px 25px 25px 26px 24px 16px 20px 831px 10px; }
.gtools svg { width: 16px; height: 16px; }
.gtools svg.a { width: 8px; height: 6px; color: #555; }
.gtools svg.pale { color: #bbb; }
.gtools > i { width: 1px; height: 18px; background: #dadce0; }
.gtools .dec { position: relative; font-weight: 500; }
.gtools .dec svg { position: absolute; left: 8px; bottom: -5px; width: 7px; height: 5px; }
.n123 { display: flex; align-items: center; }
.df { letter-spacing: -.25px; }
.fmt { width: 16px; text-align: center; font-size: 14.500px; font-weight: 500; line-height: 17px; }
.fmt.b { font-weight: 900; }
.fmt.it { font-style: italic; font-family: "Liberation Serif", serif; font-weight: 700; }
.fmt.st { text-decoration: line-through; }
.fmt.ul { border-bottom: 3px solid #000; height: 21px; margin-top: 3px; width: 18px; }
.gtools svg.up { width: 10px; height: 8px; }
.fbar { height: 22px; border-bottom: 1px solid #c0c0c0; display: flex; align-items: center; padding: 0 0 2px 12px; font: 12px "Liberation Sans", sans-serif; color: #000; }
.fbar em { width: 28px; font: italic 15px "Liberation Serif", serif; color: #aaa; }
.fbar i { width: 1px; height: 14px; background: #ccc; margin-right: 9px; }
.cells { display: flex; height: 873px; }
.cellwrap { position: relative; width: 1854px; overflow: hidden; font: 11.660px "Liberation Sans", sans-serif; color: #000; }
.row { display: grid; height: 19px; grid-template-columns: 41px 207px 122px 122px 115px 199px 130px repeat(10, 91px) 8px; }
.row > span { border: solid #e1e2e3; border-width: 0 1px 1px 0; padding-left: 3px; line-height: 21px; overflow: hidden; }
.row > span:first-child { background: #f8f9fa; border-color: #c0c0c0; color: #6b7075; font: 10.200px/17px "Roboto", sans-serif; text-align: center; padding: 0; }
.row > span.hl, .row > span.hl:first-child { background: #e8eaed; }
.row.head { height: 22px; }
.row.head > span { background: #f8f9fa; border-color: #c0c0c0; color: #555; font: 10.500px/22px "Roboto", sans-serif; text-align: center; padding: 0; }
.row.head > span.hl { background: #e8eaed; }
.row.head > span:first-child { border-right: 3px solid #b7b7b7; }
.freeze { height: 4px; background: #dadfe8; }
.freeze i { display: block; width: 41px; height: 4px; background: #b7b7b7; }
.rows { height: 813px; overflow: hidden; }
.selbox { position: absolute; left: 806px; top: 412px; width: 130px; height: 20px; border: 1px solid #1a73e8; border-bottom-width: 2px; }
.selbox::after { content: ""; position: absolute; right: -3px; bottom: -3px; width: 5px; height: 5px; background: #1a73e8; border: solid #fff; border-width: 1px 0 0 1px; box-sizing: content-box; }
.hscroll { height: 15px; display: flex; align-items: center; background: #efefef; }
.hscroll b { width: 41px; height: 15px; background: #f8f9fa; border-right: 1px solid #ddd; }
.hscroll svg { width: 8px; height: 12px; margin: 0 8px 0 15px; }
.hscroll i { width: 1094px; height: 14px; background: #cbcbcb; }
.hscroll svg.rt { margin: 0 16px 0 auto; }
.gscroll { width: 15px; background: linear-gradient(#f8f8f8 40px, #dadfe8 40px, #dadfe8 45px, #efefef 45px); display: flex; flex-direction: column; align-items: center; padding-top: 59px; }
.gscroll svg { width: 12px; height: 8px; }
.gscroll i { width: 13px; height: 13px; background: #cbcbcb; margin-top: 210px; }
.gscroll svg.dn { margin-top: 543px; }
.gscroll b { width: 15px; height: 16px; margin-top: auto; background: #f8f8f8; border: 1px solid #ddd; }
.gtabs { height: 36px; background: #f1f3f5; border-top: 1px solid #dfe1e5; display: flex; align-items: center; padding-left: 45px; font: 500 12.200px "Roboto", sans-serif; }
.plus { width: 10px; height: 10px; }
.list { width: 10px; height: 11px; margin-left: 17px; }
.st1 { width: 86px; height: 34px; margin-left: 23px; background: #fff; color: #188038; border-right: 1px solid #ddd; display: flex; align-items: center; padding-left: 14px; gap: 7px; }
.st1 svg { width: 8px; height: 6px; }
.explore { width: 94px; height: 36px; margin-left: auto; background: #fcfefd; border-left: 1px solid #bbb; color: #129e59; display: flex; align-items: center; gap: 13px; padding-left: 10px; font-size: 10.800px; font-weight: 400; }
.explore svg { width: 16px; height: 18px; }
.gside { width: 50px; border-left: 1px solid #dadce0; display: flex; flex-direction: column; align-items: center; padding-top: 17px; }
.gside svg { width: 16px; height: 16px; margin-bottom: 34.500px; }
.gside svg.ch { width: 8px; height: 10px; margin: 764px 0 0; }
.c31 { font: 8px "Roboto", sans-serif; fill: #fff; text-anchor: middle; }
```
FILE: app.js
```js
const funnel = '<svg><use href="#funnel"/></svg>';
const columns = ['TaskName', 'Process', 'TaskStatus...', 'Assigned', 'CustomerNa...', 'Custome...', 'JONum...', 'JOT...', 'Proces...', 'ServiceAddr...', 'MainLinePack...', 'PlannedJOD...', 'JOStat...', 'PreferredInstallation...', 'S...'];
const tasks = [
  ['09:00:06', '9:00:26', '353203076'],
  ['09:20:12', '9:20:41', '353282223'],
  ['09:33:53', '9:33:57', '353309971'],
  ['09:50:02', '9:50:06', '353338775']
];
let grid = '<div class="g h"><span><i class="cb"></i></span>' +
  columns.map((c, i) => `<span${i ? '' : ' class="sel"'}>${c}${funnel}</span>`).join('') + '</div>';
for (const [proc, time, id] of tasks) {
  grid += `<div class="g r"><span><i class="cb"></i></span><span>Provisioning failed, error check</span><span>Provision Service (20200730 ${proc})</span><span>New</span><span>7/30/2020 ${time}<br>AM</span>` +
    '<span></span>'.repeat(4) + `<span>${id}</span>` + '<span></span>'.repeat(6) + '</div>';
}
grid += '<div class="pager"><div>' +
  '<span><svg viewBox="0 0 8 8"><path d="M0 0h1.500v8H0zM8 0v8L2 4z"/></svg></span>' +
  '<span><svg viewBox="0 0 8 8"><path d="M6 0v8L1 4z"/></svg></span>' +
  '<span class="cur">1</span>' +
  '<span><svg viewBox="0 0 8 8"><path d="M2 0v8l5-4z"/></svg></span>' +
  '<span><svg viewBox="0 0 8 8"><path d="M8 0H6.500v8H8zM0 0v8l6-4z"/></svg></span>' +
  '</div><em>1 - 4 of 4 items</em></div>';
document.getElementById('tasks').innerHTML = grid;

// process time | start | end
const log = `15:44 33:54 34:28
15:50 34:34 35:05
15:50 35:12 35:37
16:05 35:45 36:10
16:09 36:16 36:41
35:55 36:49 37:14
16:13 37:20 37:46
16:18 37:52 38:17
16:21 38:23 38:49
16:24 38:55 39:21
16:29 39:28 39:53
16:36 39:59 40:24
16:38 40:30 40:58
16:45 41:05 41:32
16:48 41:40 42:06
16:52 42:12 42:37
16:59 42:44 43:09
17:04 43:17 43:42
17:07 43:50 44:15
17:13 44:23 44:49
17:19 44:57 45:22
17:26 45:30 45:57
17:30 46:03 46:28
17:33 46:34 46:59
17:35 47:07 47:33
17:39 47:41 48:06
17:42 48:13 48:39
17:44 48:46 49:11
17:47 49:18 49:43
17:50 49:51 50:16
17:55 50:24 50:49
18:00 50:55 51:20`.split('\n').map(line => line.split(' '));
let rows = '';
for (let i = 0; i < 43; i++) {
  const n = 17029 + i;
  let cells = ['', '', '', '', '', ''];
  if (log[i]) {
    const [p, s, e] = log[i];
    const kind = n === 17031 ? 'Issue' : 'Return';
    const stamp = n === 17034 ? '20200802 06:' : '20200730 03:';
    cells = [`Inventory ${kind} (${stamp}${p})`, 'ERP - RETURN', '08/02/2020 06:' + s, 'DONE', 'SUCCESS', '08/02/2020 06:' + e];
  }
  rows += `<div class="row"><span${n === 17049 ? ' class="hl"' : ''}>${n}</span>` +
    cells.map(c => `<span>${c}</span>`).join('') + '<span></span>'.repeat(11) + '</div>';
}
document.getElementById('erp').innerHTML = rows;
```
